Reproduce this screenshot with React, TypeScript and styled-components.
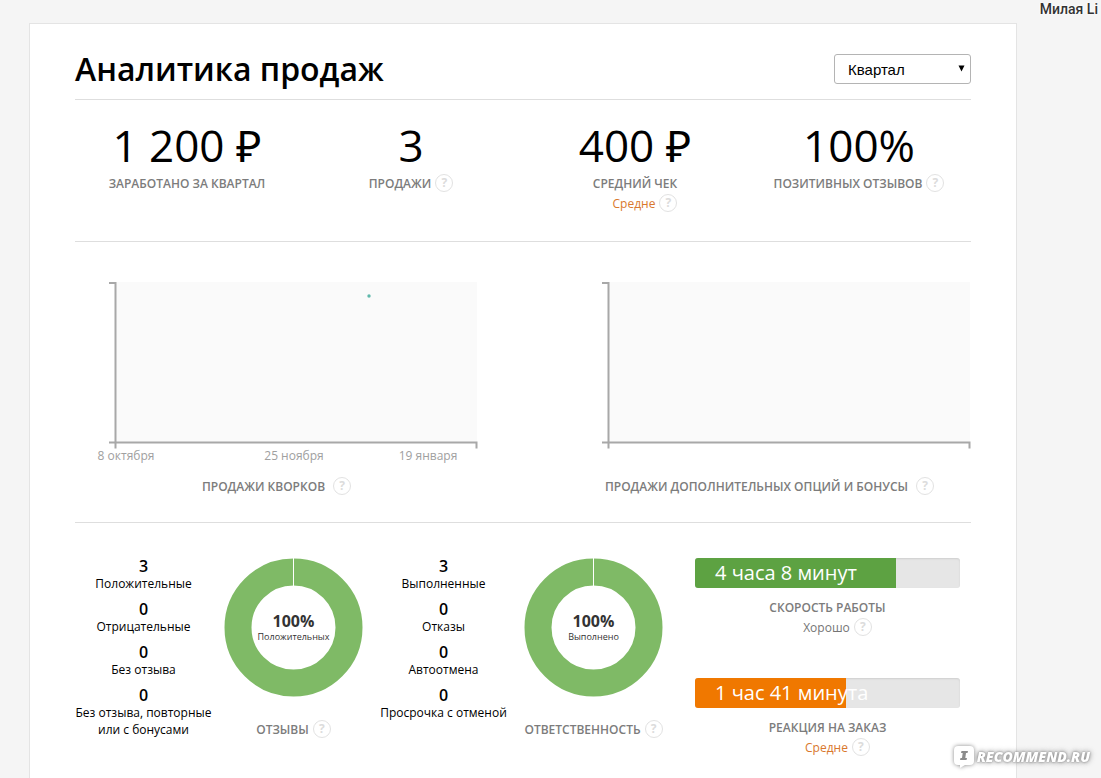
import React from "react";
import styled, { createGlobalStyle } from "styled-components";

const GlobalStyle = createGlobalStyle`
  * { box-sizing: border-box; }
  body {
    margin: 0;
    background: #f5f5f5;
    color: #000;
    font-family: "Open Sans", "Noto Sans", sans-serif;
    font-size: 12px;
    line-height: 17px;
  }
`;

const Page = styled.div`
  position: relative;
  display: flex;
  flex-direction: column;
  min-height: 100vh;
  padding: 23px 84px 0 29px;
`;

const Card = styled.main`
  flex: 1;
  padding: 30px 45px 8px;
  background: #fff;
  border: 1px solid #e4e4e4;
  border-bottom: 0;
`;

const Header = styled.header`
  display: flex;
  align-items: center;
  justify-content: space-between;
  height: 46px;
  padding-bottom: 15px;
  border-bottom: 1px solid #dedede;
`;

const Title = styled.h1`
  margin: 0;
  font-size: 32px;
  line-height: 32px;
  font-weight: 600;
`;

const SelectBox = styled.div`
  position: relative;
  width: 137px;
`;

const PeriodSelect = styled.select`
  appearance: none;
  display: block;
  width: 100%;
  height: 30px;
  padding: 0 24px 0 13px;
  border: 1px solid #b4b4b4;
  border-radius: 3px;
  background: #fff;
  color: #000;
  font-family: "Liberation Sans", Arial, sans-serif;
  font-size: 15px;
`;

const SelectArrow = styled.svg`
  position: absolute;
  top: 11px;
  right: 6px;
  pointer-events: none;
`;

const Totals = styled.section`
  display: grid;
  grid-template-columns: repeat(4, 1fr);
  height: 142px;
  padding-top: 18px;
  border-bottom: 1px solid #dedede;
  text-align: center;
`;

const TotalValue = styled.div`
  height: 55px;
  font-size: 44px;
  line-height: 55px;
  white-space: nowrap;
`;

const Caption = styled.div`
  display: flex;
  align-items: center;
  justify-content: center;
  min-height: 20px;
  color: #7c7c7c;
  font-weight: 600;
  text-transform: uppercase;
  white-space: nowrap;
`;

const Rating = styled.div<{ $tone: string }>`
  display: flex;
  align-items: center;
  justify-content: center;
  height: 20px;
  padding-left: 20px;
  color: ${(p) => p.$tone};
`;

const HelpButton = styled.button<{ $gap?: number }>`
  flex: none;
  display: inline-flex;
  align-items: center;
  justify-content: center;
  width: 18px;
  height: 18px;
  margin: 0 0 0 ${(p) => p.$gap ?? 4}px;
  padding: 0;
  border: 1px solid #e2e2e2;
  border-radius: 50%;
  background: #fff;
  color: #dcdcdc;
  font-family: inherit;
  font-size: 12px;
  line-height: 16px;
  font-weight: 700;
`;

const Charts = styled.section`
  display: grid;
  grid-template-columns: 1fr 1fr;
  gap: 90px;
  padding: 39px 0 26px;
  border-bottom: 1px solid #dedede;
`;

const ChartSvg = styled.svg`
  display: block;
  width: 100%;
  margin-bottom: 10px;
`;

const AxisText = styled.text`
  fill: #a0a0a0;
  font-size: 12px;
  text-anchor: middle;
`;

const Quality = styled.section`
  display: grid;
  grid-template-columns: 300fr 300fr 296fr;
  padding-top: 35px;
`;

const Group = styled.div`
  display: grid;
  grid-template-columns: 137px 1fr;
`;

const Counts = styled.dl`
  display: flex;
  flex-direction: column;
  gap: 9px;
  margin: 0;
  text-align: center;
`;

const CountRow = styled.div`
  display: flex;
  flex-direction: column-reverse;
`;

const CountName = styled.dt`
  margin: 0;
  white-space: pre-line;
`;

const CountValue = styled.dd`
  margin: 0;
  font-size: 16px;
  font-weight: 600;
`;

const DonutColumn = styled.div`
  display: flex;
  flex-direction: column;
  align-items: center;
  gap: 22px;
`;

const DonutSvg = styled.svg`
  display: block;
  width: 139px;
  height: 139px;
`;

const DonutPercent = styled.text`
  fill: #333;
  font-size: 16px;
  font-weight: 700;
  text-anchor: middle;
`;

const DonutLabel = styled.text`
  fill: #333;
  font-size: 9px;
  text-anchor: middle;
`;

const Speeds = styled.div`
  display: flex;
  flex-direction: column;
  gap: 41px;
  padding: 0 11px 0 20px;
`;

const Bar = styled.div`
  height: 30px;
  margin-bottom: 9px;
  border-radius: 3px;
  overflow: hidden;
  background: #e6e6e6;
  box-shadow: inset 0 1px 2px rgba(0, 0, 0, 0.1);
`;

const BarFill = styled.div<{ $color: string }>`
  height: 100%;
  padding-left: 20px;
  background: ${(p) => p.$color};
  color: #fff;
  font-size: 20px;
  line-height: 30px;
  white-space: nowrap;
`;

const UserName = styled.div`
  position: absolute;
  top: 1px;
  right: 3px;
  color: #333;
  font-family: Roboto, sans-serif;
  font-size: 14px;
  font-weight: 500;
  text-shadow: 0 0 3px #fff, 0 0 3px #fff;
`;

const SiteMark = styled.div`
  position: fixed;
  right: 11px;
  bottom: 9px;
  display: flex;
  align-items: center;
  gap: 2px;
  color: #fff;
  font-size: 14px;
  line-height: 24px;
  font-style: italic;
  font-weight: 800;
  text-shadow: 0 0 2px #888, 0 0 4px #999, 0 0 6px #aaa;
`;

const MarkIcon = styled.svg`
  overflow: visible;
  filter: drop-shadow(0 0 2px #888);
`;

function Help({ gap, about }: { gap?: number; about: string }) {
  return (
    <HelpButton type="button" $gap={gap} aria-label={`Подсказка: ${about}`}>
      ?
    </HelpButton>
  );
}

type TotalProps = {
  value: string;
  label: string;
  help?: boolean;
  rating?: string;
};

function Total({ value, label, help, rating }: TotalProps) {
  return (
    <div>
      <TotalValue>{value}</TotalValue>
      <Caption>
        {label}
        {help && <Help about={label} />}
      </Caption>
      {rating && (
        <Rating $tone="#d9782d">
          {rating}
          <Help about={rating} />
        </Rating>
      )}
    </div>
  );
}

type ChartProps = {
  title: string;
  dates?: { x: number; text: string }[];
  points?: { x: number; y: number }[];
};

function Chart({ title, dates = [], points = [] }: ChartProps) {
  return (
    <div>
      <ChartSvg viewBox="0 0 403 185" role="img" aria-label={title}>
        <rect x="41" y="1" width="361" height="160" fill="#fafafa" />
        <path
          d="M34 2H40.500V167.500M34 161.500H401.500V167.500"
          fill="none"
          stroke="#a8a8a8"
          strokeWidth="2"
        />
        {points.map((p) => (
          <circle key={p.x} cx={p.x} cy={p.y} r="1.7" fill="#5fb8ab" />
        ))}
        {dates.map((d) => (
          <AxisText key={d.text} x={d.x} y="179">
            {d.text}
          </AxisText>
        ))}
      </ChartSvg>
      <Caption>
        {title}
        <Help gap={8} about={title} />
      </Caption>
    </div>
  );
}

type DonutProps = {
  title: string;
  caption: string;
  counts: { value: number; name: string }[];
};

function DonutGroup({ title, caption, counts }: DonutProps) {
  return (
    <Group>
      <Counts>
        {counts.map((c) => (
          <CountRow key={c.name}>
            <CountName>{c.name}</CountName>
            <CountValue>{c.value}</CountValue>
          </CountRow>
        ))}
      </Counts>
      <DonutColumn>
        <DonutSvg viewBox="0 0 139 139" role="img" aria-label={title}>
          <circle cx="69.5" cy="69.5" r="55.5" fill="none" stroke="#7fba66" strokeWidth="27" />
          <path d="M69.5 0V28" stroke="#fff" />
          <DonutPercent x="69.5" y="69">100%</DonutPercent>
          <DonutLabel x="69.5" y="82">{caption}</DonutLabel>
        </DonutSvg>
        <Caption>
          {title}
          <Help about={title} />
        </Caption>
      </DonutColumn>
    </Group>
  );
}

type SpeedProps = {
  time: string;
  percent: number;
  color: string;
  title: string;
  rating: string;
  tone: string;
};

function Speed({ time, percent, color, title, rating, tone }: SpeedProps) {
  return (
    <div>
      <Bar>
        <BarFill $color={color} style={{ width: `${percent}%` }}>
          {time}
        </BarFill>
      </Bar>
      <Caption>{title}</Caption>
      <Rating $tone={tone}>
        {rating}
        <Help about={title} />
      </Rating>
    </div>
  );
}

export default function App() {
  return (
    <Page>
      <GlobalStyle />
      <Card>
        <Header>
          <Title>Аналитика продаж</Title>
          <SelectBox>
            <PeriodSelect aria-label="Период" defaultValue="quarter">
              <option value="quarter">Квартал</option>
            </PeriodSelect>
            <SelectArrow width="7" height="7" viewBox="0 0 7 7" aria-hidden="true">
              <path d="M0.5 0.5H6.5L3.5 6.5Z" fill="#000" />
            </SelectArrow>
          </SelectBox>
        </Header>

        <Totals>
          <Total value="1 200 ₽" label="Заработано за квартал" />
          <Total value="3" label="Продажи" help />
          <Total value="400 ₽" label="Средний чек" rating="Средне" />
          <Total value="100%" label="Позитивных отзывов" help />
        </Totals>

        <Charts>
          <Chart
            title="Продажи кворков"
            dates={[
              { x: 51, text: "8 октября" },
              { x: 219, text: "25 ноября" },
              { x: 353, text: "19 января" },
            ]}
            points={[{ x: 294, y: 15 }]}
          />
          <Chart title="Продажи дополнительных опций и бонусы" />
        </Charts>

        <Quality>
          <DonutGroup
            title="Отзывы"
            caption="Положительных"
            counts={[
              { value: 3, name: "Положительные" },
              { value: 0, name: "Отрицательные" },
              { value: 0, name: "Без отзыва" },
              { value: 0, name: "Без отзыва, повторные\nили с бонусами" },
            ]}
          />
          <DonutGroup
            title="Ответственность"
            caption="Выполнено"
            counts={[
              { value: 3, name: "Выполненные" },
              { value: 0, name: "Отказы" },
              { value: 0, name: "Автоотмена" },
              { value: 0, name: "Просрочка с отменой" },
            ]}
          />
          <Speeds>
            <Speed
              time="4 часа 8 минут"
              percent={76}
              color="#5da242"
              title="Скорость работы"
              rating="Хорошо"
              tone="#757575"
            />
            <Speed
              time="1 час 41 минута"
              percent={57}
              color="#f07800"
              title="Реакция на заказ"
              rating="Средне"
              tone="#d9782d"
            />
          </Speeds>
        </Quality>
      </Card>

      <UserName>Милая Li</UserName>
      <SiteMark>
        <MarkIcon width="22" height="24" viewBox="0 0 22 24" aria-hidden="true">
          <path
            d="M5 1H17Q21 1 21 5V16Q21 20 17 20H12L7 23V20H5Q1 20 1 16V5Q1 1 5 1Z"
            fill="#fff"
          />
          <path d="M8.500 6H15L14.500 8H13L12.300 13H14L13.500 15H7L7.500 13H9L9.700 8H8Z" fill="#8c8c8c" />
        </MarkIcon>
        RECOMMEND.RU
      </SiteMark>
    </Page>
  );
}
